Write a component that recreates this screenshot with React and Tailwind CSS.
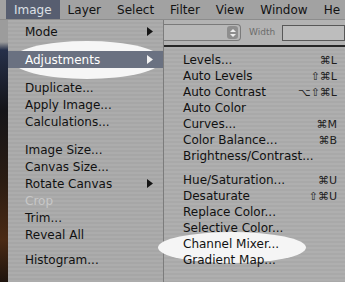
import React from "react";

const menuBar = ["Image", "Layer", "Select", "Filter", "View", "Window", "He"];

const mainItems = [
  { label: "Mode", arrow: true },
  { sep: 11 },
  { label: "Adjustments", arrow: true, active: true },
  { sep: 11 },
  { label: "Duplicate..." },
  { label: "Apply Image..." },
  { label: "Calculations..." },
  { sep: 11 },
  { label: "Image Size..." },
  { label: "Canvas Size..." },
  { label: "Rotate Canvas", arrow: true },
  { label: "Crop", disabled: true },
  { label: "Trim..." },
  { label: "Reveal All" },
  { sep: 8 },
  { label: "Histogram..." },
];

const subItems = [
  { label: "Levels...", key: "⌘L" },
  { label: "Auto Levels", key: "⇧⌘L" },
  { label: "Auto Contrast", key: "⌥⇧⌘L" },
  { label: "Auto Color" },
  { label: "Curves...", key: "⌘M" },
  { label: "Color Balance...", key: "⌘B" },
  { label: "Brightness/Contrast..." },
  { sep: 8 },
  { label: "Hue/Saturation...", key: "⌘U" },
  { label: "Desaturate", key: "⇧⌘U" },
  { label: "Replace Color..." },
  { label: "Selective Color..." },
  { label: "Channel Mixer..." },
  { label: "Gradient Map..." },
];

const Arrow = ({ white }) => (
  <svg width="6" height="9" viewBox="0 0 6 9">
    <polygon points="0,0 6,4.5 0,9" fill={white ? "#f2f2f2" : "#151515"} />
  </svg>
);

const MenuBar = () => (
  <div className="flex h-[20px] pl-[6px] bg-[#a2a2a2] border-b border-[#8c8c8c] text-[12px]">
    {menuBar.map((m, i) => (
      <div
        key={m}
        className={
          i === 0
            ? "flex items-center px-[8px] bg-[#575e70] text-[#dde0e6]"
            : "flex items-center px-[8px] text-[#121212]"
        }
      >
        {m}
      </div>
    ))}
  </div>
);

const MainMenu = () => (
  <div className="relative w-[156px] pt-[3px] border-r border-[#7c7c7c] bg-[repeating-linear-gradient(180deg,#acacac_0px,#acacac_2px,#a6a6a6_2px,#a6a6a6_4px)]">
    <div className="absolute left-[4px] top-[21px] w-[150px] h-[38px] rounded-[50%] bg-[#f6f6f6]" />
    {mainItems.map((it, i) =>
      it.sep ? (
        <div key={i} style={{ height: it.sep }} />
      ) : (
        <div
          key={i}
          className={
            it.active
              ? "relative flex h-[17px] items-center justify-between pl-[17px] pr-[10px] bg-[#6a7181] text-white"
              : it.disabled
              ? "relative flex h-[17px] items-center justify-between pl-[17px] pr-[10px] text-[#c8c8c8]"
              : "relative flex h-[17px] items-center justify-between pl-[17px] pr-[10px] text-[#111]"
          }
        >
          <span>{it.label}</span>
          {it.arrow && <Arrow white={it.active} />}
        </div>
      )
    )}
  </div>
);

const Toolbar = () => (
  <div className="flex h-[25px] items-center bg-[#b3b3b3]">
    <div className="flex h-[17px] w-[77px] items-center justify-end rounded-r-[4px] border border-l-0 border-[#7a7a7a] bg-[#b8b8b8] pr-[2px]">
      <div className="flex h-[13px] w-[11px] flex-col items-center justify-center gap-[2px] rounded-[3px] bg-[#8e8e8e]">
        <svg width="6" height="3" viewBox="0 0 6 3">
          <polygon points="0,3 3,0 6,3" fill="#eee" />
        </svg>
        <svg width="6" height="3" viewBox="0 0 6 3">
          <polygon points="0,0 3,3 6,0" fill="#eee" />
        </svg>
      </div>
    </div>
    <span className="ml-[8px] text-[9px] text-[#6c6c6c]">Width</span>
    <div className="ml-[7px] h-[16px] flex-1 border border-[#585858] bg-[#bdbdbd]" />
  </div>
);

const SubMenu = () => (
  <div className="flex-1 pt-[5px] bg-[repeating-linear-gradient(180deg,#afafaf_0px,#afafaf_2px,#a9a9a9_2px,#a9a9a9_4px)]">
    {subItems.map((it, i) =>
      it.sep ? (
        <div key={i} style={{ height: it.sep }} />
      ) : (
        <div
          key={i}
          className="relative z-[2] flex h-[16px] items-center justify-between pl-[19px] pr-[8px] text-[#111]"
        >
          <span>{it.label}</span>
          {it.key && <span className="text-[11px] text-[#1e1e1e]">{it.key}</span>}
        </div>
      )
    )}
  </div>
);

export default function App() {
  return (
    <div className="relative w-[345px] h-[282px] overflow-hidden bg-[#1b1d24] font-['DejaVu_Sans',sans-serif] text-[12px] leading-none">
      <div className="absolute left-[158px] top-[232px] z-[1] h-[31px] w-[148px] rounded-[50%] bg-[#f5f5f5]" />
      <MenuBar />
      <div className="flex h-[262px]">
        <div className="w-[8px] bg-[linear-gradient(180deg,#9c9c9c_0px,#9c9c9c_22px,#26304a_30px,#141418_90px,#2a1c12_160px,#4a2a14_220px,#1e140e_262px)]" />
        <MainMenu />
        <div className="flex flex-1 flex-col">
          <Toolbar />
          <div className="h-[2px] bg-[#262626]" />
          <SubMenu />
        </div>
      </div>
    </div>
  );
}
